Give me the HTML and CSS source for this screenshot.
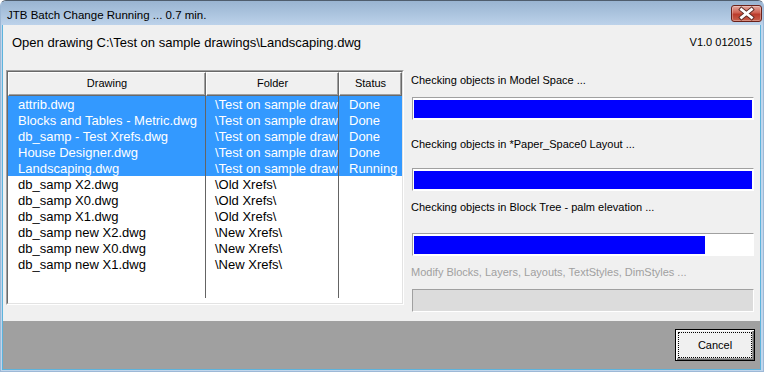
FILE: index.html
```html
<!DOCTYPE html>
<html>
<head>
  <title>JTB Batch Change</title>
  <link rel="stylesheet" href="styles.css">
</head>
<body>
  <div class="window">
    <div class="titlebar">
      <span class="title">JTB Batch Change Running ... 0.7 min.</span>
      <div class="close-btn">
        <svg width="29" height="15" viewBox="0 0 29 15">
          <path d="M9.5 3.5 L19.5 11.5 M19.5 3.5 L9.5 11.5" stroke="#5b2a24" stroke-width="4.6" stroke-linecap="square"/>
          <path d="M9.5 3.5 L19.5 11.5 M19.5 3.5 L9.5 11.5" stroke="#fff" stroke-width="2.8" stroke-linecap="square"/>
        </svg>
      </div>
    </div>
    <div class="frame">
      <div class="client">
        <div class="info-row">
          <span class="status-text">Open drawing C:\Test on sample drawings\Landscaping.dwg</span>
          <span class="version">V1.0 012015</span>
        </div>

        <div class="main">
          <div class="list">
            <div class="list-inner">
              <div class="list-head">
                <div class="head-cell c1">Drawing</div>
                <div class="head-cell c2">Folder</div>
                <div class="head-cell c3">Status</div>
              </div>
              <div class="list-body">
                <div class="row selected"><div class="cell c1">attrib.dwg</div><div class="cell c2">\Test on sample drawings\</div><div class="cell c3">Done</div></div>
                <div class="row selected"><div class="cell c1">Blocks and Tables - Metric.dwg</div><div class="cell c2">\Test on sample drawings\</div><div class="cell c3">Done</div></div>
                <div class="row selected"><div class="cell c1">db_samp - Test Xrefs.dwg</div><div class="cell c2">\Test on sample drawings\</div><div class="cell c3">Done</div></div>
                <div class="row selected"><div class="cell c1">House Designer.dwg</div><div class="cell c2">\Test on sample drawings\</div><div class="cell c3">Done</div></div>
                <div class="row selected"><div class="cell c1">Landscaping.dwg</div><div class="cell c2">\Test on sample drawings\</div><div class="cell c3">Running</div></div>
                <div class="row"><div class="cell c1">db_samp X2.dwg</div><div class="cell c2">\Old Xrefs\</div><div class="cell c3"></div></div>
                <div class="row"><div class="cell c1">db_samp X0.dwg</div><div class="cell c2">\Old Xrefs\</div><div class="cell c3"></div></div>
                <div class="row"><div class="cell c1">db_samp X1.dwg</div><div class="cell c2">\Old Xrefs\</div><div class="cell c3"></div></div>
                <div class="row"><div class="cell c1">db_samp new X2.dwg</div><div class="cell c2">\New Xrefs\</div><div class="cell c3"></div></div>
                <div class="row"><div class="cell c1">db_samp new X0.dwg</div><div class="cell c2">\New Xrefs\</div><div class="cell c3"></div></div>
                <div class="row"><div class="cell c1">db_samp new X1.dwg</div><div class="cell c2">\New Xrefs\</div><div class="cell c3"></div></div>
                <div class="row filler"><div class="cell c1"></div><div class="cell c2"></div><div class="cell c3"></div></div>
              </div>
            </div>
          </div>

          <div class="progress-panel">
            <div class="label first">Checking objects in Model Space ...</div>
            <div class="bar near"><div class="fill" style="width: 100%;"></div></div>
            <div class="label far">Checking objects in *Paper_Space0 Layout ...</div>
            <div class="bar far"><div class="fill" style="width: 100%;"></div></div>
            <div class="label near">Checking objects in Block Tree - palm elevation ...</div>
            <div class="bar farther"><div class="fill" style="width: 86%;"></div></div>
            <div class="label near disabled">Modify Blocks, Layers, Layouts, TextStyles, DimStyles ...</div>
            <div class="bar near disabled"></div>
          </div>
        </div>

        <div class="footer">
          <button class="btn-cancel"><span>Cancel</span></button>
        </div>
      </div>
    </div>
  </div>
</body>
</html>
```

FILE: styles.css
```css
body {
  margin: 0;
  background-color: #fff;
  font-family: "Liberation Sans", Arial, sans-serif;
  color: #000;
}

.window {
  width: 764px;
  height: 372px;
  box-sizing: border-box;
  border: 1px solid #9db8d6;
  border-top-color: #4f5d6d;
  border-radius: 6px 6px 0 0;
  background-color: #c1d6ec;
  display: flex;
  flex-direction: column;
  overflow: hidden;
}

.titlebar {
  height: 24px;
  flex-shrink: 0;
  display: flex;
  justify-content: space-between;
  align-items: flex-start;
  padding: 0 1px 0 6px;
  background: linear-gradient(#99b4d1, #bcd2ea);
}

.title {
  font-size: 11.5px;
  line-height: 14px;
  margin-top: 7px;
}

.close-btn {
  width: 29px;
  height: 15px;
  margin-top: 4px;
  border: 1px solid #6b2119;
  border-radius: 3px;
  background: linear-gradient(#e3a89e, #cf6151 45%, #bb3b2b 55%, #c8604c);
  box-shadow: inset 0 0 0 1px rgba(255, 255, 255, 0.3);
}

.close-btn svg {
  display: block;
}

.frame {
  flex: 1;
  padding: 0 2px 1px 1px;
}

.client {
  height: 100%;
  box-sizing: border-box;
  border: 1px solid #5cb3dc;
  border-top: none;
  background-color: #f0f0f0;
  display: flex;
  flex-direction: column;
}

.info-row {
  height: 45px;
  flex-shrink: 0;
  box-sizing: border-box;
  display: flex;
  justify-content: space-between;
  align-items: flex-start;
  padding: 10px 8px 0 9px;
}

.status-text {
  font-size: 13px;
  line-height: 16px;
}

.version {
  font-size: 11px;
  line-height: 14px;
  margin-top: 0;
}

.main {
  height: 251px;
  flex-shrink: 0;
  display: flex;
  gap: 7px;
  padding-left: 3px;
}

/* list view */
.list {
  width: 398px;
  height: 235px;
  box-sizing: border-box;
  border: 1px solid;
  border-color: #a0a0a0 #fff #fff #a0a0a0;
}

.list-inner {
  height: 100%;
  box-sizing: border-box;
  border: 1px solid;
  border-color: #696969 #e3e3e3 #e3e3e3 #696969;
  background-color: #fff;
  display: flex;
  flex-direction: column;
  overflow: hidden;
}

.list-head {
  display: flex;
  height: 24px;
  flex-shrink: 0;
}

.head-cell {
  box-sizing: border-box;
  height: 24px;
  border: 1px solid;
  border-color: #fff #696969 #696969 #fff;
  box-shadow: inset -1px -1px #a0a0a0;
  background-color: #f0f0f0;
  font-size: 11px;
  line-height: 21px;
  text-align: center;
}

.c1 { width: 198px; flex-shrink: 0; }
.c2 { width: 133px; flex-shrink: 0; }
.c3 { width: 63px; flex-shrink: 0; }

.list-body {
  flex: 1;
  display: flex;
  flex-direction: column;
  padding-bottom: 5px;
}

.row {
  display: flex;
  height: 16px;
  flex-shrink: 0;
}

.row.selected {
  background-color: #3399ff;
  color: #fff;
}

.row.filler {
  flex: 1;
  height: auto;
}

.cell {
  box-sizing: border-box;
  font-size: 13px;
  line-height: 14px;
  padding: 2px 0 0 10px;
  white-space: nowrap;
  overflow: hidden;
}

.cell.c1,
.cell.c2 {
  border-right: 1px solid #646464;
}

.cell.c2 {
  padding-left: 9px;
}

/* progress side */
.progress-panel {
  width: 343px;
  display: flex;
  flex-direction: column;
}

.label {
  font-size: 11px;
  line-height: 14px;
}

.label.first { margin-top: 3px; }
.label.near { margin-top: 9px; }
.label.far { margin-top: 17px; }

.label.disabled {
  color: #a0a0a0;
}

.bar {
  width: 342px;
  height: 23px;
  margin-left: 1px;
  box-sizing: border-box;
  border: 1px solid;
  border-color: #a0a0a0 #fff #fff #a0a0a0;
  padding: 2px 1px 1px 1px;
  background-color: #fff;
}

.bar.near { margin-top: 10px; }
.bar.far { margin-top: 17px; }
.bar.farther { margin-top: 19px; }

.bar.disabled {
  background-color: #dcdcdc;
}

.fill {
  height: 100%;
  background-color: #0000ff;
}

.footer {
  flex: 1;
  display: flex;
  justify-content: flex-end;
  align-items: flex-start;
  padding: 8px 5px 0 0;
  background-color: #a0a0a0;
}

.btn-cancel {
  width: 80px;
  height: 32px;
  box-sizing: border-box;
  padding: 2px;
  border: 1px solid #000;
  background-color: #f0f0f0;
  box-shadow: inset 1px 1px #fff, inset -1px -1px #696969, inset -2px -2px #a0a0a0;
  font-family: "Liberation Sans", Arial, sans-serif;
  font-size: 11px;
  color: #000;
}

.btn-cancel span {
  display: flex;
  height: 100%;
  box-sizing: border-box;
  align-items: center;
  justify-content: center;
  border: 1px dotted #000;
}
```
